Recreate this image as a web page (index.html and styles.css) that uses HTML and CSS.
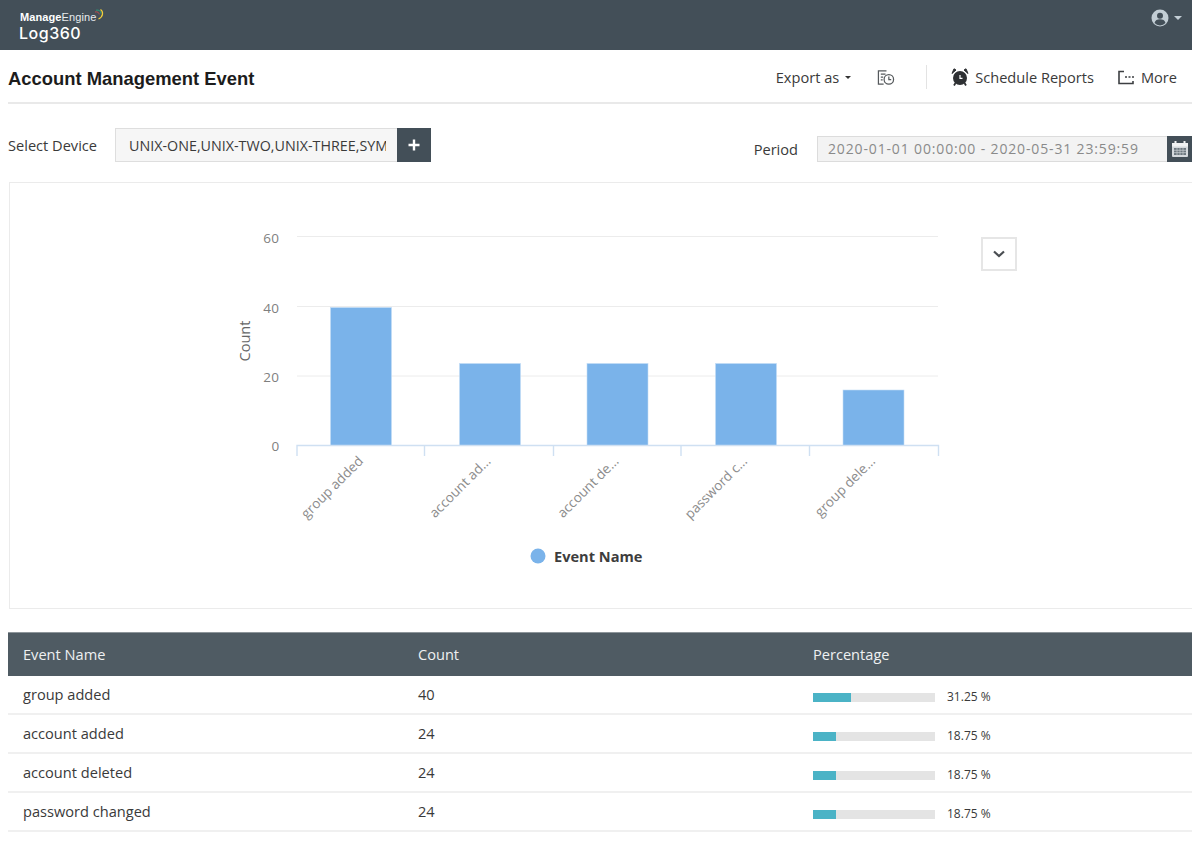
FILE: index.html
```html
<!DOCTYPE html>
<html lang="en">
<head>
<meta charset="utf-8">
<title>Account Management Event</title>
<link rel="stylesheet" href="styles.css">
</head>
<body>
<header class="topbar">
  <div class="brand">
    <div class="brand-top">
      <span class="brand-me"><b>Manage</b>Engine</span>
      <svg class="brand-arcs" width="9" height="11" viewBox="0 0 9 11" fill="none">
        <path d="M1 1.2C4 .6 6 2 6 4.6" stroke="#2a9a7b" stroke-width="1"/>
        <path d="M0 3C2.400 2.400 4 3.400 4.200 5.400" stroke="#c0504d" stroke-width="1"/>
        <path d="M5.500 .5C8.500 2.500 8.500 7.500 3.500 10" stroke="#f2cf3a" stroke-width="1.200"/>
      </svg>
    </div>
    <div class="brand-product">Log360</div>
  </div>
  <div class="user">
    <svg width="18" height="18" viewBox="0 0 18 18">
      <circle cx="9" cy="9" r="8.500" fill="#c3ced5"/>
      <circle cx="9" cy="6.800" r="3" fill="#434f58"/>
      <path d="M3.500 14c.6-2.800 2.800-3.800 5.500-3.800s4.900 1 5.500 3.800A8 8 0 0 1 9 16.500 8 8 0 0 1 3.500 14z" fill="#434f58"/>
    </svg>
    <span class="user-caret"></span>
  </div>
</header>

<section class="toolbar">
  <h1 class="title">Account Management Event</h1>
  <div class="actions">
    <span class="action export">Export as <i class="caret"></i></span>
    <svg class="icon-history" width="18" height="17" viewBox="0 0 19 17" fill="none" stroke="#55595c" stroke-width="1.300">
      <path d="M10 1.500H1.500v14H7"/>
      <path d="M4 5h5M4 8h2.500M4 11h2"/>
      <circle cx="12.500" cy="10.500" r="5"/>
      <path d="M12.500 7.500v3.200h2.500"/>
    </svg>
    <span class="divider"></span>
    <span class="action schedule">
      <svg width="18" height="18" viewBox="0 0 18 18">
        <circle cx="9" cy="10" r="7" fill="#2e3033"/>
        <path d="M1 5.500 5 2 3 .8zM17 5.500 13 2 15 .8z" fill="#2e3033" stroke="#2e3033"/>
        <path d="M4.500 15 3 17.500M13.500 15 15 17.500" stroke="#2e3033" stroke-width="1.800"/>
        <path d="M9 7v3.300h2.500" stroke="#fff" stroke-width="1.200" fill="none"/>
      </svg>
      Schedule Reports
    </span>
    <span class="action more">
      <svg width="16" height="15" viewBox="0 0 16 15" fill="none" stroke="#3c3f42" stroke-width="1.600">
        <path d="M6 1.500H1v12h14V11"/>
        <path d="M7 7h2M10.500 7h2M14 7h2" stroke-width="1.400"/>
      </svg>
      More
    </span>
  </div>
</section>

<section class="filters">
  <div class="filter-device">
    <label class="filter-label">Select Device</label>
    <div class="device-input"><span class="device-text">UNIX-ONE,UNIX-TWO,UNIX-THREE,SYMANTEC</span></div>
    <button class="device-add" type="button" aria-label="Add">
      <svg width="12" height="12" viewBox="0 0 12 12"><path d="M6 .5v11M.5 6h11" stroke="#fff" stroke-width="2.400"/></svg>
    </button>
  </div>
  <div class="filter-period">
    <label class="filter-label">Period</label>
    <div class="period-input">2020-01-01 00:00:00 - 2020-05-31 23:59:59</div>
    <button class="period-cal" type="button" aria-label="Calendar">
      <svg width="18" height="18" viewBox="0 0 18 18">
        <rect x="1" y="3" width="16" height="14" rx="1" fill="#d5dade"/>
        <rect x="1" y="3" width="16" height="3.500" fill="#f1f3f4"/>
        <rect x="3.500" y="1" width="2" height="4" fill="#f1f3f4"/>
        <rect x="12.500" y="1" width="2" height="4" fill="#f1f3f4"/>
        <rect x="3" y="8" width="12" height="7" fill="#6d7880"/>
        <path d="M3 10.300h12M3 12.600h12M6 8v7M9 8v7M12 8v7" stroke="#c9ced2" stroke-width=".7"/>
      </svg>
    </button>
  </div>
</section>

<section class="chart-panel">
  <svg class="chart" width="1182" height="424" viewBox="10 183 1182 424">
    <g class="grid">
      <line x1="297" x2="938" y1="236.500" y2="236.500"/>
      <line x1="297" x2="938" y1="306.500" y2="306.500"/>
      <line x1="297" x2="938" y1="376" y2="376"/>
    </g>
    <g class="bars">
      <rect x="330.500" y="307.500" width="61" height="138"/>
      <rect x="459.500" y="363.500" width="61" height="82"/>
      <rect x="587" y="363.500" width="61" height="82"/>
      <rect x="715.500" y="363.500" width="61" height="82"/>
      <rect x="843" y="390" width="61" height="55.500"/>
    </g>
    <path class="axis" d="M297 456v-10.500h641.500v10.500M424.500 446v10M553.500 446v10M681 446v10M809.500 446v10"/>
    <g class="y-labels">
      <text x="279.500" y="243">60</text>
      <text x="279.500" y="312.500">40</text>
      <text x="279.500" y="382">20</text>
      <text x="279.500" y="451">0</text>
    </g>
    <text class="y-title" transform="translate(250 341) rotate(-90)">Count</text>
    <g class="x-labels">
      <text transform="translate(364 462) rotate(-45)">group added</text>
      <text transform="translate(491.500 462) rotate(-45)">account ad...</text>
      <text transform="translate(619.500 462) rotate(-45)">account de...</text>
      <text transform="translate(748 462) rotate(-45)">password c...</text>
      <text transform="translate(876 462) rotate(-45)">group dele...</text>
    </g>
    <circle class="legend-dot" cx="538" cy="556" r="7.500"/>
    <text class="legend-text" x="554" y="562">Event Name</text>
  </svg>
  <button class="chart-menu" type="button" aria-label="Chart options">
    <svg width="12" height="8" viewBox="0 0 12 8" fill="none"><path d="M1 1.500 6 6l5-4.500" stroke="#4a4e52" stroke-width="2.200"/></svg>
  </button>
</section>

<section class="report">
  <div class="row head">
    <div>Event Name</div><div>Count</div><div>Percentage</div>
  </div>
  <div class="row">
    <div>group added</div><div>40</div>
    <div class="pct"><span class="track"><span class="fill" style="width:31.25%"></span></span><span class="pct-value">31.25 %</span></div>
  </div>
  <div class="row">
    <div>account added</div><div>24</div>
    <div class="pct"><span class="track"><span class="fill" style="width:18.75%"></span></span><span class="pct-value">18.75 %</span></div>
  </div>
  <div class="row">
    <div>account deleted</div><div>24</div>
    <div class="pct"><span class="track"><span class="fill" style="width:18.75%"></span></span><span class="pct-value">18.75 %</span></div>
  </div>
  <div class="row">
    <div>password changed</div><div>24</div>
    <div class="pct"><span class="track"><span class="fill" style="width:18.75%"></span></span><span class="pct-value">18.75 %</span></div>
  </div>
</section>
</body>
</html>
```

FILE: styles.css
```css
* { box-sizing: border-box; }
html, body { margin: 0; padding: 0; }
body {
  width: 1192px;
  height: 863px;
  overflow: hidden;
  background: #fff;
  color: #333;
  font-family: "Open Sans", "Liberation Sans", sans-serif;
  font-size: 14.6px;
}

/* top bar */
.topbar {
  height: 50px;
  background: #434f58;
  display: flex;
  justify-content: space-between;
  padding: 9px 10px 0 19px;
}
.brand { color: #fff; }
.brand-top { display: flex; align-items: flex-start; height: 15px; padding-left: 1px; }
.brand-me { font-family: "Liberation Sans", sans-serif; font-size: 11px; line-height: 16px; color: #e8ecee; letter-spacing: .1px; }
.brand-me b { color: #fff; font-weight: 700; }
.brand-arcs { margin: 0 0 0 -1px; }
.brand-product { font-family: Inter, sans-serif; font-size: 16px; line-height: 19px; letter-spacing: .5px; font-weight: 500; }
.user { display: flex; align-items: center; gap: 5px; height: 18px; margin-top: 0; }
.user-caret { width: 0; height: 0; border: 4px solid transparent; border-top-color: #c3ced5; border-bottom: 0; }

/* title + actions */
.toolbar {
  height: 54px;
  margin-left: 8px;
  border-bottom: 2px solid #e9e9e9;
  display: flex;
  justify-content: space-between;
  align-items: center;
  padding-right: 15px;
}
.title { margin: 5px 0 0; font-family: "Liberation Sans", sans-serif; font-size: 18.4px; font-weight: 700; color: #1c1c1c; letter-spacing: 0; }
.actions { display: flex; align-items: center; color: #3a3a3a; height: 26px; margin-top: 2px; }
.action { display: inline-flex; align-items: center; white-space: nowrap; }
.caret { display: inline-block; width: 0; height: 0; margin-left: 6px; border: 3.5px solid transparent; border-top-color: #333; border-bottom: 0; }
.icon-history { margin-left: 26px; }
.divider { width: 1px; height: 24px; margin-left: 31px; background: #e3e3e3; }
.schedule { margin-left: 24px; gap: 6px; }
.more { margin-left: 24px; gap: 7px; font-size: 14.6px; }

/* filters */
.filters {
  height: 78px;
  display: flex;
  justify-content: space-between;
  align-items: flex-start;
  padding-left: 8px;
}
.filter-label { color: #3a3a3a; white-space: nowrap; }
.filter-device { display: flex; align-items: center; margin-top: 24px; height: 34px; }
.device-input {
  width: 282px;
  height: 34px;
  margin-left: 18px;
  padding: 0 11px 0 13px;
  background: #f6f6f6;
  border: 1px solid #dedede;
  border-right: 0;
  display: flex;
  align-items: center;
}
.device-text { display: block; width: 100%; overflow: hidden; white-space: nowrap; color: #3a3a3a; font-size: 14.3px; }
.device-add {
  width: 34px;
  height: 34px;
  padding: 0;
  border: 0;
  background: #434f58;
  display: flex;
  align-items: center;
  justify-content: center;
}
.filter-period { display: flex; align-items: center; margin-top: 32px; height: 26px; }
.period-input {
  width: 350px;
  height: 26px;
  margin-left: 19px;
  padding-left: 10px;
  background: #f3f3f3;
  border: 1px solid #dcdcdc;
  border-right: 0;
  color: #8a8a8a;
  font-size: 14px;
  line-height: 24px;
  letter-spacing: .85px;
  white-space: nowrap;
}
.period-cal {
  width: 25px;
  height: 26px;
  padding: 0;
  border: 0;
  background: #434f58;
  display: flex;
  align-items: center;
  justify-content: center;
}

/* chart */
.chart-panel {
  position: relative;
  height: 427px;
  margin-left: 9px;
  border: 1px solid #ebebeb;
  border-right: 0;
}
.chart { display: block; }
.grid line { stroke: #ececec; stroke-width: 1; }
.bars rect { fill: #7ab3ea; stroke: #c4dcf5; stroke-width: .6; }
.axis { fill: none; stroke: #cfe0f2; stroke-width: 1.4; }
.chart text { font-family: "Open Sans", sans-serif; }
.y-labels text { fill: #7f7f7f; font-size: 13.500px; text-anchor: end; letter-spacing: .4px; }
.y-title { fill: #666; font-size: 14.5px; text-anchor: middle; }
.x-labels text { fill: #8c8c8c; font-size: 13.5px; text-anchor: end; }
.legend-dot { fill: #7ab3ea; }
.legend-text { fill: #3d3d3d; font-size: 14.6px; font-weight: 700; }
.chart-menu {
  position: absolute;
  top: 54px;
  left: 971px;
  width: 36px;
  height: 34px;
  padding: 0;
  background: #fff;
  border: 2px solid #e6e6e6;
  display: flex;
  align-items: center;
  justify-content: center;
}

/* table */
.report { margin: 23px 0 0 8px; }
.row {
  display: grid;
  grid-template-columns: 395px 395px 1fr;
  height: 39px;
  align-items: center;
  padding: 0 0 2px 15px;
  border-bottom: 2px solid #f0f0f0;
  color: #3a3a3a;
}
.row.head {
  height: 44px;
  padding: 0 0 2px 15px;
  background: #4f5b63;
  color: #eef0f1;
  border-bottom: 0;
  border-top: 1px solid #8d959a;
}
.pct { display: flex; align-items: center; }
.track { display: block; width: 122px; height: 9px; margin-top: 8px; background: #e4e4e4; }
.fill { display: block; height: 100%; background: #4bb3c6; }
.pct-value { margin: 6px 0 0 12px; font-size: 12px; color: #3a3a3a; }
```
